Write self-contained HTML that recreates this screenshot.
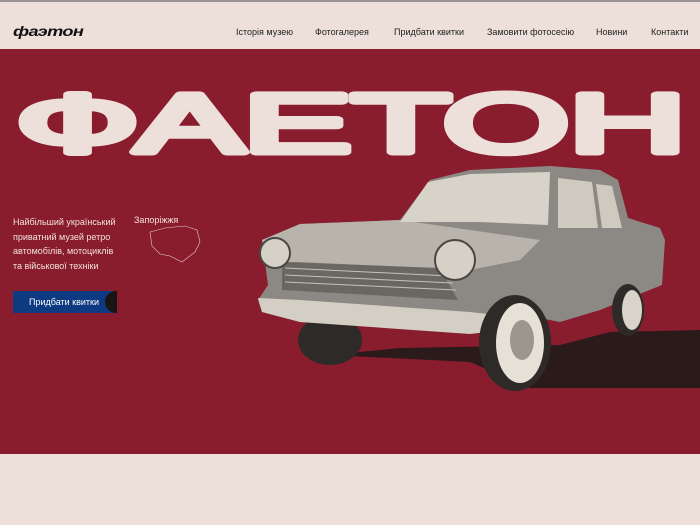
<!DOCTYPE html>
<html><head><meta charset="utf-8"><style>
html,body{margin:0;padding:0;width:700px;height:525px;overflow:hidden;background:#ede0da;font-family:"Liberation Sans","DejaVu Sans",sans-serif}
.hdr{position:absolute;left:0;top:0;width:700px;height:49px;background:#ede0da;border-top:2px solid #9a9290;box-sizing:border-box}
.logo{position:absolute;left:13px;top:21px;font:italic 900 14px "Liberation Sans",sans-serif;letter-spacing:-0.5px;color:#111;transform:scaleX(1.3);transform-origin:left}
.nav{position:absolute;top:25px;font-size:9px;color:#222}
.red{position:absolute;left:0;top:49px;width:700px;height:405px;background:#891d2e}
.txt{position:absolute;left:13px;top:215px;color:#f0e2dc;font-size:9px;line-height:14.5px;width:115px}
.btn{position:absolute;left:13px;top:291px;width:102px;height:22px;background:#0e3a82;color:#fff;font-size:9px;line-height:22px;padding-left:16px;box-sizing:border-box}
.btn:after{content:"";position:absolute;right:-2px;top:0;width:12px;height:22px;border-radius:11px 0 0 11px;background:#1a1412}
</style></head><body>
<div class="hdr">
<div class="logo">фаэтон</div>
<div class="nav" style="left:236px">Історія музею</div>
<div class="nav" style="left:315px">Фотогалерея</div>
<div class="nav" style="left:394px">Придбати квитки</div>
<div class="nav" style="left:487px">Замовити фотосесію</div>
<div class="nav" style="left:596px">Новини</div>
<div class="nav" style="left:651px">Контакти</div>
</div>
<div class="red"></div>
<svg style="position:absolute;left:0;top:0" width="700" height="525">
<text x="16" y="152" textLength="670" lengthAdjust="spacingAndGlyphs" style="font-family:'Liberation Sans','DejaVu Sans',sans-serif;font-weight:normal;font-size:83px" fill="#ede0da" stroke="#ede0da" stroke-width="7" stroke-linejoin="round">ФАЕТОН</text>
<path d="M150,232 L165,228 L185,226 L197,230 L200,242 L195,252 L182,262 L170,256 L160,254 L152,246 Z" fill="none" stroke="#e8c9c9" stroke-width="0.6"/>
<path d="M330,355 L470,362 L530,388 L700,388 L700,330 L610,332 L560,345 L400,348 Z" fill="#2a1a1a"/>
<ellipse cx="330" cy="340" rx="32" ry="25" fill="#2e2a27"/>
<path d="M262,240 L300,224 L400,220 L430,180 L470,170 L550,166 L600,170 L618,180 L628,218 L660,228 L665,240 L662,285 L600,310 L560,322 L540,318 L505,330 L480,333 L300,322 L262,312 L258,300 L268,285 Z" fill="#8c8884"/>
<path d="M262,240 L300,224 L400,220 L470,230 L540,240 L520,260 L470,270 L300,262 L270,262 Z" fill="#b8b3ab"/>
<path d="M400,222 L428,182 L470,174 L550,172 L548,225 L480,222 Z" fill="#d8d3c8"/>
<path d="M558,178 L592,182 L598,228 L558,228 Z" fill="#cfcabf"/>
<path d="M596,184 L612,186 L622,228 L602,228 Z" fill="#cfcabf"/>
<path d="M282,262 L440,268 L458,300 L282,290 Z" fill="#6a6661"/>
<g stroke="#c6c1b8" stroke-width="1"><line x1="285" y1="268" x2="450" y2="276"/><line x1="285" y1="275" x2="453" y2="283"/><line x1="285" y1="282" x2="456" y2="290"/></g>
<circle cx="275" cy="253" r="15" fill="#d6d1c7" stroke="#4a4642" stroke-width="2"/>
<circle cx="455" cy="260" r="20" fill="#d6d1c7" stroke="#4a4642" stroke-width="2"/>
<path d="M258,298 L300,300 L470,312 L505,316 L505,330 L470,334 L300,322 L262,312 Z" fill="#d4cfc5"/>
<ellipse cx="515" cy="343" rx="36" ry="48" fill="#2e2a27"/>
<ellipse cx="520" cy="343" rx="24" ry="40" fill="#e6e1d6"/>
<ellipse cx="522" cy="340" rx="12" ry="20" fill="#9a958d"/>
<ellipse cx="628" cy="310" rx="16" ry="26" fill="#2e2a27"/>
<ellipse cx="632" cy="310" rx="10" ry="20" fill="#d9d4ca"/>
</svg>
<div class="txt">Найбільший український<br>приватний музей ретро<br>автомобілів, мотоциклів<br>та військової техніки</div>
<div style="position:absolute;left:134px;top:215px;color:#f0e2dc;font-size:9px">Запоріжжя</div>
<div class="btn">Придбати квитки</div>
</body></html>
